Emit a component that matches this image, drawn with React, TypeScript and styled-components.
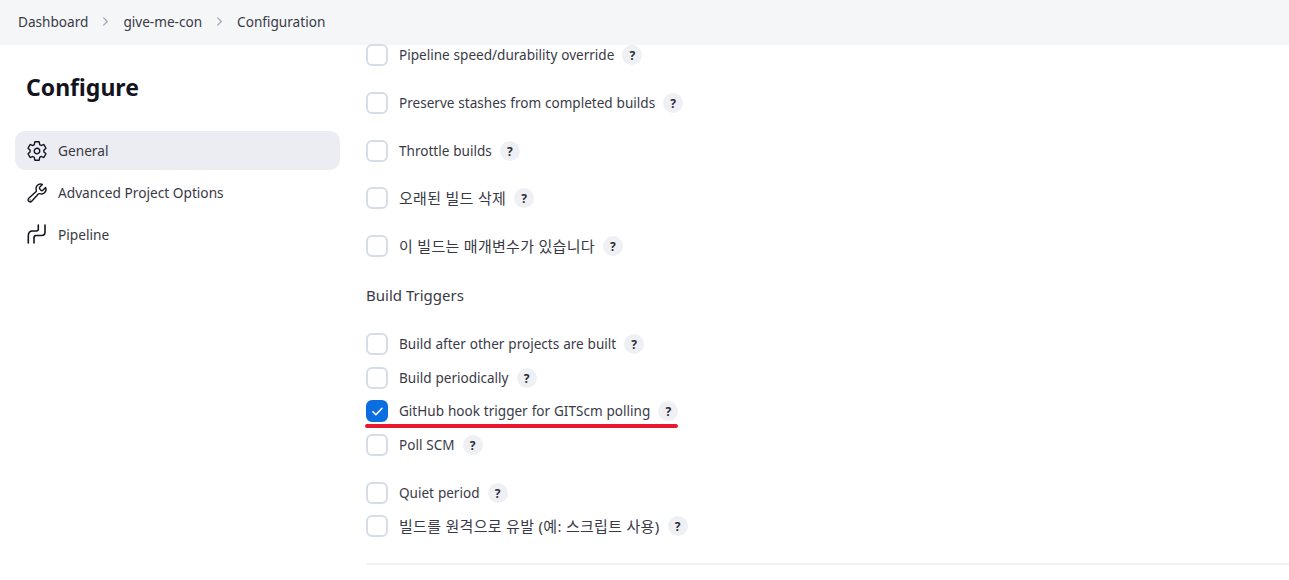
import React from 'react'
import styled, { createGlobalStyle } from 'styled-components'
import { IoSettingsOutline, IoBuildOutline, IoChevronForward } from 'react-icons/io5'

const GlobalStyle = createGlobalStyle`
    html, body {
        margin: 0;
        padding: 0;
        background: #fff;
        font-family: "Noto Sans", "Noto Sans CJK KR", sans-serif;
        color: #14141f;
        overflow: hidden;
    }
`

const PipelineIcon = () => (
    <svg width="22" height="22" viewBox="0 0 22 22" fill="none" stroke="#14141f" strokeWidth="1.6" strokeLinecap="round">
        <path d="M2.3 19V12Q2.3 7 6.5 7H10.5Q12.3 7 12.3 5V1" />
        <path d="M8 19V14Q8 11.5 10 11.5H15.5Q19 11.5 19 8V1" />
    </svg>
)

const CheckMark = () => (
    <svg width="11" height="9" viewBox="0 0 12 10" fill="none" stroke="#fff" strokeWidth="1.7" strokeLinecap="round" strokeLinejoin="round">
        <path d="M1 5.4L4.2 8.6L11 1.4" />
    </svg>
)

type Option = { label: string; checked?: boolean; marked?: boolean; korean?: boolean; after: number }

const generalOptions: Option[] = [
    { label: 'Pipeline speed/durability override', after: 26 },
    { label: 'Preserve stashes from completed builds', after: 26 },
    { label: 'Throttle builds', after: 25 },
    { label: '오래된 빌드 삭제', korean: true, after: 26 },
    { label: '이 빌드는 매개변수가 있습니다', korean: true, after: 0 },
]

const triggerOptions: Option[] = [
    { label: 'Build after other projects are built', after: 12 },
    { label: 'Build periodically', after: 11 },
    { label: 'GitHub hook trigger for GITScm polling', checked: true, marked: true, after: 12 },
    { label: 'Poll SCM', after: 26 },
    { label: 'Quiet period', after: 11 },
    { label: '빌드를 원격으로 유발 (예: 스크립트 사용)', korean: true, after: 0 },
]

const renderOption = (option: Option) => (
    <Row key={option.label} after={option.after}>
        <Checkbox checked={option.checked}>{option.checked && <CheckMark />}</Checkbox>
        <Label korean={option.korean}>{option.label}</Label>
        <Help>?</Help>
        {option.marked && <RedMark />}
    </Row>
)

export default function App() {
    return (
        <Page>
            <GlobalStyle />
            <Breadcrumbs>
                <Crumb>Dashboard</Crumb>
                <Separator><IoChevronForward size={13} /></Separator>
                <Crumb>give-me-con</Crumb>
                <Separator><IoChevronForward size={13} /></Separator>
                <Crumb>Configuration</Crumb>
            </Breadcrumbs>
            <Body>
                <Sidebar>
                    <Title>Configure</Title>
                    <Menu>
                        <MenuItem active><IoSettingsOutline size={22} /><span>General</span></MenuItem>
                        <MenuItem><IoBuildOutline size={22} /><span>Advanced Project Options</span></MenuItem>
                        <MenuItem><PipelineIcon /><span>Pipeline</span></MenuItem>
                    </Menu>
                </Sidebar>
                <Main>
                    {generalOptions.map(renderOption)}
                    <SectionTitle>Build Triggers</SectionTitle>
                    {triggerOptions.map(renderOption)}
                    <Divider />
                </Main>
            </Body>
        </Page>
    )
}

const Page = styled.div`
    width: 1289px;
    height: 580px;
    overflow: hidden;
`

const Breadcrumbs = styled.nav`
    box-sizing: border-box;
    height: 45px;
    display: flex;
    align-items: center;
    padding: 0 0 2px 18px;
    background: #f5f6f8;
    font-size: 13.6px;
`

const Crumb = styled.span`
    color: #3a3a46;
`

const Separator = styled.span`
    display: flex;
    width: 35px;
    justify-content: center;
    color: #9ba7b7;
`

const Body = styled.div`
    display: flex;
`

const Sidebar = styled.aside`
    width: 325px;
    margin-left: 15px;
    flex-shrink: 0;
`

const Title = styled.h1`
    margin: 24px 0 26px 11px;
    font-size: 23px;
    line-height: 36px;
    font-weight: 700;
    color: #14141f;
`

const Menu = styled.div`
    display: flex;
    flex-direction: column;
    gap: 3px;
`

const MenuItem = styled.div<{ active?: boolean }>`
    height: 39px;
    display: flex;
    align-items: center;
    gap: 10px;
    padding-left: 11px;
    border-radius: 10px;
    font-size: 13.7px;
    color: #3a3a46;
    background: ${props => props.active ? '#ecedf2' : 'transparent'};
    svg {
        flex-shrink: 0;
        color: #14141f;
    }
`

const Main = styled.main`
    flex: 1;
    margin-left: 26px;
    margin-top: -1px;
    display: flex;
    flex-direction: column;
`

const Row = styled.div<{ after: number }>`
    position: relative;
    height: 22px;
    display: flex;
    align-items: center;
    margin-bottom: ${props => props.after}px;
`

const Checkbox = styled.span<{ checked?: boolean }>`
    box-sizing: border-box;
    width: 22px;
    height: 22px;
    display: flex;
    align-items: center;
    justify-content: center;
    border-radius: 6px;
    border: 2px solid ${props => props.checked ? '#0b6ee0' : '#d6dce8'};
    background: ${props => props.checked ? '#0b6ee0' : '#fff'};
`

const Label = styled.span<{ korean?: boolean }>`
    margin-left: 11px;
    padding-bottom: ${props => props.korean ? '2px' : '0'};
    font-size: ${props => props.korean ? '15px' : '13.55px'};
    letter-spacing: ${props => props.korean ? '0.3px' : '0'};
    word-spacing: ${props => props.korean ? '0' : '0.4px'};
    color: #3a3a46;
`

const Help = styled.span`
    margin-left: 8px;
    width: 20px;
    height: 20px;
    display: flex;
    align-items: center;
    justify-content: center;
    border-radius: 50%;
    background: #eef0f4;
    font-size: 12px;
    font-weight: 700;
    color: #2c2c38;
`

const RedMark = styled.span`
    position: absolute;
    left: -1px;
    top: 24px;
    width: 313px;
    height: 4px;
    border-radius: 2px;
    background: #e8192f;
`

const SectionTitle = styled.h2`
    margin: 26px 0 26px;
    font-size: 15px;
    line-height: 24px;
    font-weight: 400;
    color: #3a3a46;
`

const Divider = styled.hr`
    margin: 26px 0 0;
    border: none;
    height: 2px;
    background: #f1f2f5;
`
